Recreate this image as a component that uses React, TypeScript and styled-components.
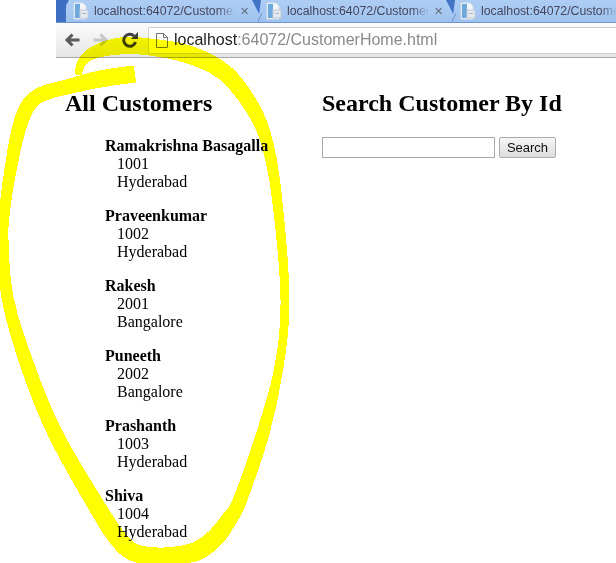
import React from "react";
import styled, { createGlobalStyle } from "styled-components";

const customers = [
  { name: "Ramakrishna Basagalla", id: "1001", city: "Hyderabad" },
  { name: "Praveenkumar", id: "1002", city: "Hyderabad" },
  { name: "Rakesh", id: "2001", city: "Bangalore" },
  { name: "Puneeth", id: "2002", city: "Bangalore" },
  { name: "Prashanth", id: "1003", city: "Hyderabad" },
  { name: "Shiva", id: "1004", city: "Hyderabad" }
];

const tabs = [
  { width: 193, inset: 7, hasNotch: false },
  { width: 194, inset: 7, hasNotch: true },
  { width: 188, inset: 7, hasNotch: true }
];

// x, y, width of the marker stroke along its way
const marker: number[][] = [
  [135, 74, 17],
  [100, 79, 17],
  [67, 87, 15],
  [42, 94, 15],
  [28, 106, 15],
  [18, 132, 14],
  [10, 173, 12],
  [5, 207, 11],
  [3, 240, 11],
  [8, 300, 12],
  [28, 367, 14],
  [55, 433, 15],
  [96, 505, 17],
  [116, 536, 18],
  [131, 551, 18],
  [150, 556, 18],
  [172, 556, 18],
  [197, 551, 19],
  [216, 537, 18],
  [230, 518, 16],
  [240, 500, 14],
  [263, 433, 13],
  [279, 367, 9],
  [285, 300, 9],
  [278, 207, 10],
  [268, 146, 12],
  [252, 107, 15],
  [225, 73, 17],
  [190, 55, 18],
  [150, 47, 17],
  [120, 46, 17],
  [95, 52, 13],
  [82, 62, 9],
  [78, 75, 7]
];

const smooth = (points: number[][]) => {
  let d = `M${points[0][0]} ${points[0][1]}`;
  for (let i = 0; i < points.length - 1; i++) {
    const p0 = points[Math.max(i - 1, 0)];
    const p1 = points[i];
    const p2 = points[i + 1];
    const p3 = points[Math.min(i + 2, points.length - 1)];
    d += `C${p1[0] + (p2[0] - p0[0]) / 6} ${p1[1] + (p2[1] - p0[1]) / 6} ${p2[0] - (p3[0] - p1[0]) / 6} ${p2[1] - (p3[1] - p1[1]) / 6} ${p2[0]} ${p2[1]}`;
  }
  return d;
};

const outline = (points: number[][]) => {
  const sideA: number[][] = [];
  const sideB: number[][] = [];
  points.forEach(([x, y, w], i) => {
    const prev = points[Math.max(i - 1, 0)];
    const next = points[Math.min(i + 1, points.length - 1)];
    const dx = next[0] - prev[0];
    const dy = next[1] - prev[1];
    const len = Math.hypot(dx, dy);
    const nx = (-dy / len) * (w / 2);
    const ny = (dx / len) * (w / 2);
    sideA.push([x + nx, y + ny]);
    sideB.push([x - nx, y - ny]);
  });
  const back = smooth(sideB.reverse()).replace(/^M/, "L");
  return `${smooth(sideA)}${back}Z`;
};

const DocIcon = () => (
  <svg width="16" height="18" viewBox="0 0 16 18">
    <path d="M1 1h9l3 3v13H1z" fill="#f2f6fb" stroke="#d5dee9" />
    <rect x="2" y="2" width="5" height="14" fill="#6ea9de" />
    <rect x="7" y="8" width="8" height="8" fill="#e4e9ef" stroke="#c3ccd6" />
    <rect x="9" y="11" width="4" height="1" fill="#aeb8c4" />
  </svg>
);

export default function App() {
  return (
    <>
      <GlobalStyle />
      <Chrome>
        <TabStrip>
          {tabs.map(({ width, inset, hasNotch }, index) => (
            <Tab key={index} $width={width} $inset={inset} $hasNotch={hasNotch}>
              <DocIcon />
              <TabTitle>localhost:64072/Customer</TabTitle>
              <TabClose>✕</TabClose>
            </Tab>
          ))}
        </TabStrip>
        <Toolbar>
          <NavGroup>
            <NavIcon viewBox="0 0 16 16">
              <path d="M15.500 8H3.500M8.500 2.500 3 8l5.500 5.500" fill="none" stroke="#5a5a5a" strokeWidth="3" />
            </NavIcon>
            <NavIcon viewBox="0 0 16 16">
              <path d="M.5 8h12M7.500 2.500 13 8l-5.500 5.500" fill="none" stroke="#c6c6c6" strokeWidth="3" />
            </NavIcon>
            <NavIcon viewBox="0 0 16 16">
              <path d="M13.500 10a6 6 0 1 1-1.500-6" fill="none" stroke="#3f3f3f" strokeWidth="3" />
              <path d="M9 7h7V0z" fill="#3f3f3f" />
            </NavIcon>
          </NavGroup>
          <AddressBar>
            <svg width="12" height="15" viewBox="0 0 12 15">
              <path d="M.5.500h7l4 4v10H.5z" fill="#fff" stroke="#777" />
              <path d="M7.500.500v4h4" fill="none" stroke="#777" />
            </svg>
            <Url>
              <UrlHost>localhost</UrlHost>:64072/CustomerHome.html
            </Url>
          </AddressBar>
        </Toolbar>
      </Chrome>
      <Page>
        <CustomersColumn>
          <Heading>All Customers</Heading>
          {customers.map(({ name, id, city }) => (
            <Customer key={name}>
              <CustomerName>{name}</CustomerName>
              <CustomerLine>{id}</CustomerLine>
              <CustomerLine>{city}</CustomerLine>
            </Customer>
          ))}
        </CustomersColumn>
        <SearchColumn>
          <Heading>Search Customer By Id</Heading>
          <SearchForm>
            <SearchInput />
            <SearchButton>Search</SearchButton>
          </SearchForm>
        </SearchColumn>
      </Page>
      <Scribble viewBox="0 0 616 563">
        <path d={outline(marker)} fill="#ffff00" shapeRendering="crispEdges" />
      </Scribble>
    </>
  );
}

const GlobalStyle = createGlobalStyle`
  html, body {
    margin: 0;
    background: #fff;
    height: 563px;
    overflow: hidden;
  }
  #root {
    position: relative;
    height: 563px;
    overflow: hidden;
  }
`;

const Chrome = styled.div`
  margin-left: 56px;
  overflow: hidden;
`;

const TabStrip = styled.div`
  display: flex;
  height: 23px;
  padding-left: 10px;
  box-sizing: border-box;
  background: linear-gradient(100deg, #3f6fc2 0 60%, #5a88d0 100%);
  border-bottom: 1px solid #6f95cc;
  overflow: hidden;
`;

const Tab = styled.div<{ $width: number; $inset: number; $hasNotch: boolean }>`
  position: relative;
  display: flex;
  flex: none;
  align-items: center;
  gap: 5px;
  width: ${({ $width }) => $width}px;
  padding-left: ${({ $inset }) => $inset}px;
  box-sizing: border-box;
  background: linear-gradient(#aecdf4, #9fc3ef);
  clip-path: ${({ $hasNotch }) =>
    $hasNotch ? "none" : "polygon(3px 0, 100% 0, 100% 100%, -9px 100%)"};

  &::before {
    content: "";
    display: ${({ $hasNotch }) => ($hasNotch ? "block" : "none")};
    position: absolute;
    top: 0;
    left: -7px;
    width: 9px;
    height: 14px;
    background: #4474c6;
    clip-path: polygon(0 0, 100% 0, 80% 100%);
  }

  &::after {
    content: "";
    display: ${({ $hasNotch }) => ($hasNotch ? "block" : "none")};
    position: absolute;
    top: 13px;
    left: -1px;
    width: 4px;
    height: 9px;
    background: linear-gradient(to top right, transparent 42%, #7fa3d6 42% 58%, transparent 58%);
    transform: scaleX(-1);
  }
`;

const TabTitle = styled.span`
  flex: 1;
  min-width: 0;
  overflow: hidden;
  white-space: nowrap;
  font: 12.300px "Liberation Sans", Arial, sans-serif;
  color: #46465c;
  mask-image: linear-gradient(to right, #000 88%, transparent);
`;

const TabClose = styled.span`
  flex: none;
  width: 19px;
  text-align: left;
  font: bold 11px "DejaVu Sans", sans-serif;
  color: #5f6b78;
`;

const Toolbar = styled.div`
  display: flex;
  align-items: center;
  height: 34px;
  padding-left: 8px;
  gap: 10px;
  background: linear-gradient(#fbfbfb, #e6e6e6);
  border-bottom: 1px solid #a8a8a8;
`;

const NavGroup = styled.div`
  display: flex;
  gap: 13px;
`;

const NavIcon = styled.svg`
  flex: none;
  width: 16px;
  height: 16px;
`;

const AddressBar = styled.div`
  display: flex;
  flex: 1;
  align-items: center;
  gap: 6px;
  height: 27px;
  padding-left: 7px;
  background: #fff;
  border: 1px solid #d0d0d0;
  border-right: 0;
  border-radius: 2px 0 0 2px;
  box-sizing: border-box;
`;

const Url = styled.span`
  font: 16px "Liberation Sans", Arial, sans-serif;
  color: #8a8a8a;
`;

const UrlHost = styled.span`
  color: #222;
`;

const Page = styled.main`
  display: flex;
  padding: 0 0 0 65px;
  font: 16px/18px "Liberation Serif", "Times New Roman", serif;
  color: #000;
`;

const CustomersColumn = styled.section`
  width: 257px;
  flex: none;
`;

const SearchColumn = styled.section`
  flex: 1;
`;

const Heading = styled.h2`
  margin: 31px 0 20px;
  font: bold 24px/28px "Liberation Serif", "Times New Roman", serif;
`;

const Customer = styled.div`
  margin: 0 0 16px 40px;
`;

const CustomerName = styled.div`
  font-weight: bold;
`;

const CustomerLine = styled.div`
  padding-left: 12px;
`;

const SearchForm = styled.form`
  display: flex;
  gap: 4px;
`;

const SearchInput = styled.input`
  width: 173px;
  height: 21px;
  padding: 0;
  box-sizing: border-box;
  background: #fff;
  border: 1px solid #ababab;
`;

const SearchButton = styled.button`
  width: 57px;
  height: 21px;
  padding: 0;
  box-sizing: border-box;
  font: 13px "Liberation Sans", Arial, sans-serif;
  color: #111;
  background: linear-gradient(#f6f6f6, #dedede);
  border: 1px solid #acacac;
  border-radius: 2px;
`;

const Scribble = styled.svg`
  position: absolute;
  top: 0;
  left: 0;
  width: 616px;
  height: 563px;
  mix-blend-mode: multiply;
  pointer-events: none;
`;
